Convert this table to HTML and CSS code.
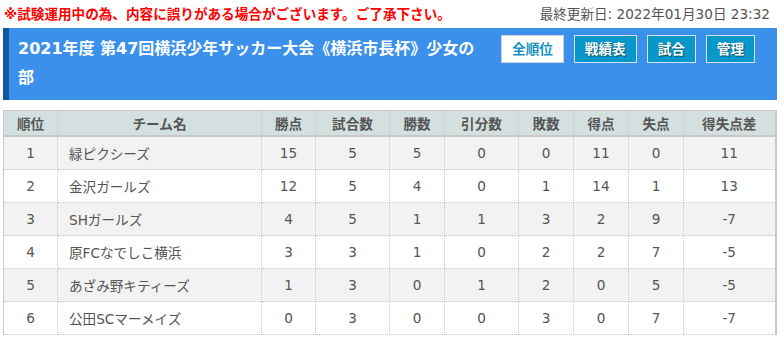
FILE: index.html
```html
<!DOCTYPE html>
<html lang="ja">
<head>
<meta charset="utf-8">
<title>順位表</title>
<link rel="stylesheet" href="styles.css">
</head>
<body>
<div class="page">
  <div class="topbar">
    <span class="notice">※試験運用中の為、内容に誤りがある場合がございます。ご了承下さい。</span>
    <span class="updated">最終更新日: 2022年01月30日 23:32</span>
  </div>
  <div class="header">
    <h1 class="title">2021年度 第47回横浜少年サッカー大会《横浜市長杯》少女の部</h1>
    <div class="nav">
      <a class="btn btn-active">全順位</a>
      <a class="btn">戦績表</a>
      <a class="btn">試合</a>
      <a class="btn">管理</a>
    </div>
  </div>
  <table class="standings">
    <colgroup>
      <col class="c-rank"><col class="c-team"><col class="c-pts"><col class="c-games"><col class="c-win"><col class="c-draw"><col class="c-lose"><col class="c-gf"><col class="c-ga"><col class="c-gd">
    </colgroup>
    <thead>
      <tr><th>順位</th><th>チーム名</th><th>勝点</th><th>試合数</th><th>勝数</th><th>引分数</th><th>敗数</th><th>得点</th><th>失点</th><th>得失点差</th></tr>
    </thead>
    <tbody>
      <tr><td>1</td><td class="team">緑ピクシーズ</td><td>15</td><td>5</td><td>5</td><td>0</td><td>0</td><td>11</td><td>0</td><td>11</td></tr>
      <tr><td>2</td><td class="team">金沢ガールズ</td><td>12</td><td>5</td><td>4</td><td>0</td><td>1</td><td>14</td><td>1</td><td>13</td></tr>
      <tr><td>3</td><td class="team">SHガールズ</td><td>4</td><td>5</td><td>1</td><td>1</td><td>3</td><td>2</td><td>9</td><td>-7</td></tr>
      <tr><td>4</td><td class="team">原FCなでしこ横浜</td><td>3</td><td>3</td><td>1</td><td>0</td><td>2</td><td>2</td><td>7</td><td>-5</td></tr>
      <tr><td>5</td><td class="team">あざみ野キティーズ</td><td>1</td><td>3</td><td>0</td><td>1</td><td>2</td><td>0</td><td>5</td><td>-5</td></tr>
      <tr><td>6</td><td class="team">公田SCマーメイズ</td><td>0</td><td>3</td><td>0</td><td>0</td><td>3</td><td>0</td><td>7</td><td>-7</td></tr>
    </tbody>
  </table>
</div>
</body>
</html>
```

FILE: styles.css
```css
html, body {
  margin: 0;
  padding: 0;
  background: #fff;
}
body {
  font-family: "DejaVu Sans", "Noto Sans CJK JP", sans-serif;
  font-size: 13.6px;
  color: #555;
}
.page {
  width: 774px;
  margin-left: 3px;
}
.topbar {
  display: flex;
  justify-content: space-between;
  align-items: center;
  height: 26px;
  padding: 0 7px 2px 1px;
}
.notice {
  color: #f00;
  font-weight: bold;
}
.updated {
  color: #555;
}
.header {
  display: flex;
  align-items: flex-start;
  background: #3a90ea;
  border-left: 6px solid #0f5aa2;
  height: 72px;
  box-sizing: border-box;
}
.title {
  flex: 1;
  margin: 0;
  padding: 6px 26px 0 9px;
  font-size: 16px;
  line-height: 29px;
  font-weight: bold;
  color: #fff;
}
.nav {
  display: flex;
  gap: 10px;
  margin: 7px 22px 0 0;
}
.btn {
  display: block;
  height: 26px;
  line-height: 26px;
  padding: 0 10px;
  border: 1px solid #d8e4ec;
  background: #0897c9;
  color: #fff;
  font-weight: bold;
  font-size: 13.6px;
  text-shadow: 1px 1px 1px rgba(0, 0, 0, 0.45);
  text-align: center;
}
.btn-active {
  background: #fff;
  color: #1692c2;
  border-color: #d0d0d0;
  text-shadow: none;
}
.standings {
  margin-top: 10px;
  width: 773px;
  border-collapse: collapse;
  table-layout: fixed;
  border-left: 1px solid #c8c8c8;
  border-right: 2px solid #c8c8c8;
}
.c-rank { width: 54px; }
.c-team { width: 204px; }
.c-pts { width: 54px; }
.c-games { width: 74px; }
.c-win { width: 55px; }
.c-draw { width: 74px; }
.c-lose { width: 55px; }
.c-gf { width: 55px; }
.c-ga { width: 55px; }
.c-gd { width: 92px; }
.standings th {
  background: #d4dfdf;
  font-weight: bold;
  color: #555;
  height: 24px;
  padding: 0;
  border-top: 1px solid #c8c8c8;
  border-bottom: 2px solid #c8c8c8;
  border-left: 1px dotted #c8c8c8;
  border-right: 1px dotted #c8c8c8;
}
.standings td {
  height: 32px;
  padding: 0;
  text-align: center;
  border: 1px dotted #c8c8c8;
}
.standings td.team {
  text-align: left;
  padding-left: 11px;
}
.standings tbody tr:nth-child(odd) td {
  background: #f2f2f2;
}
```
